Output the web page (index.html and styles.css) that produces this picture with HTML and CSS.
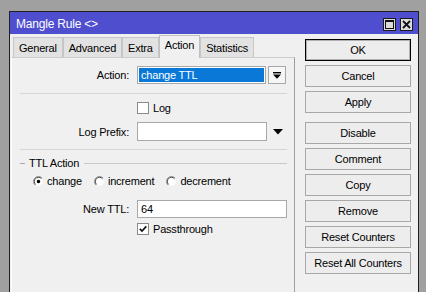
FILE: index.html
```html
<!DOCTYPE html>
<html>
<head>
<meta charset="utf-8">
<link rel="stylesheet" href="styles.css">
</head>
<body>
<div class="window">
  <div class="titlebar">
    <span class="title">Mangle Rule &lt;&gt;</span>
    <span class="tbtns">
      <span class="tbtn"><svg width="11" height="11" viewBox="0 0 11 11"><rect x="1.5" y="1.5" width="8" height="8" fill="none" stroke="#111" stroke-width="1"/><rect x="1" y="1" width="9" height="2" fill="#111"/></svg></span>
      <span class="tbtn"><svg width="11" height="11" viewBox="0 0 11 11"><path d="M2 2 L9 9 M9 2 L2 9" stroke="#111" stroke-width="1.8" fill="none"/></svg></span>
    </span>
  </div>
  <div class="body">
    <div class="left">
      <div class="tabs">
        <div class="tab">General</div>
        <div class="tab">Advanced</div>
        <div class="tab">Extra</div>
        <div class="tab active">Action</div>
        <div class="tab">Statistics</div>
      </div>
      <div class="panel">
        <div class="row r-action">
          <span class="lbl">Action:</span>
          <div class="select"><span class="sel-text">change TTL</span></div>
          <div class="dd-btn"><svg width="8" height="7" viewBox="0 0 8 7"><rect x="0" y="0" width="8" height="1.4" fill="#000"/><path d="M0 2.6 H8 L4 6.8 Z" fill="#000"/></svg></div>
        </div>
        <div class="sep s1"></div>
        <div class="row r-log">
          <span class="lbl"></span>
          <span class="cb"></span>
          <span class="cb-text">Log</span>
        </div>
        <div class="row r-prefix">
          <span class="lbl">Log Prefix:</span>
          <div class="field prefix"></div>
          <svg class="prefix-arrow" width="10" height="6" viewBox="0 0 10 6"><path d="M0 0 H10 L5 5.5 Z" fill="#000"/></svg>
        </div>
        <div class="sep s2"></div>
        <div class="legend">
          <span class="lg-seg"></span>
          <span class="lg-text">TTL Action</span>
          <span class="lg-line"></span>
        </div>
        <div class="radios">
          <span class="radio-item">
            <svg width="11" height="11" viewBox="0 0 12 12"><circle cx="6" cy="6" r="4.6" fill="#fff"/><path d="M2.1 9.9 A5.5 5.5 0 0 1 9.9 2.1" stroke="#8a8a8a" fill="none"/><path d="M2.8 9.2 A4.5 4.5 0 0 1 9.2 2.8" stroke="#404040" fill="none"/><circle cx="6" cy="6" r="1.9" fill="#000"/></svg>
            <span>change</span>
          </span>
          <span class="radio-item">
            <svg width="11" height="11" viewBox="0 0 12 12"><circle cx="6" cy="6" r="4.6" fill="#fff"/><path d="M2.1 9.9 A5.5 5.5 0 0 1 9.9 2.1" stroke="#8a8a8a" fill="none"/><path d="M2.8 9.2 A4.5 4.5 0 0 1 9.2 2.8" stroke="#404040" fill="none"/></svg>
            <span>increment</span>
          </span>
          <span class="radio-item">
            <svg width="11" height="11" viewBox="0 0 12 12"><circle cx="6" cy="6" r="4.6" fill="#fff"/><path d="M2.1 9.9 A5.5 5.5 0 0 1 9.9 2.1" stroke="#8a8a8a" fill="none"/><path d="M2.8 9.2 A4.5 4.5 0 0 1 9.2 2.8" stroke="#404040" fill="none"/></svg>
            <span>decrement</span>
          </span>
        </div>
        <div class="row r-ttl">
          <span class="lbl">New TTL:</span>
          <div class="field ttl"><span class="field-text">64</span></div>
        </div>
        <div class="row r-pass">
          <span class="lbl"></span>
          <span class="cb"><svg width="10" height="10" viewBox="0 0 10 10"><path d="M1.8 4.8 L4 7 L8.3 2.4" stroke="#111" stroke-width="1.7" fill="none"/></svg></span>
          <span class="cb-text">Passthrough</span>
        </div>
      </div>
    </div>
    <div class="buttons">
      <div class="btn ok">OK</div>
      <div class="btn">Cancel</div>
      <div class="btn">Apply</div>
      <div class="btn extra-gap">Disable</div>
      <div class="btn">Comment</div>
      <div class="btn">Copy</div>
      <div class="btn">Remove</div>
      <div class="btn">Reset Counters</div>
      <div class="btn">Reset All Counters</div>
    </div>
  </div>
</div>
</body>
</html>
```

FILE: styles.css
```css
html, body {
  margin: 0;
  padding: 0;
}
body {
  background: #a0a0a0;
  width: 426px;
  height: 292px;
  overflow: hidden;
  font-family: "Liberation Sans", Arial, sans-serif;
  font-size: 11px;
  letter-spacing: -0.2px;
  color: #000;
}
.window {
  margin: 11px 0 0 9px;
  width: 408px;
  height: 280px;
  border: 1px solid #202020;
  border-bottom: none;
  background: #f0f0f0;
  display: flex;
  flex-direction: column;
}
.titlebar {
  height: 22px;
  flex: none;
  background: #4e4ecf;
  display: flex;
  align-items: center;
  padding: 0 5px 0 6px;
  color: #fff;
  font-size: 12px;
}
.title {
  flex: 1;
  margin-top: 1px;
}
.tbtns {
  display: flex;
  gap: 4px;
  margin-top: 2px;
}
.tbtn {
  width: 11px;
  height: 11px;
  border: 1px solid #1a1a1a;
  background: #dcdcdc;
  display: flex;
  align-items: center;
  justify-content: center;
}
.body {
  flex: 1;
  display: flex;
  min-height: 0;
}
.left {
  width: 284px;
  margin-left: 1px;
  display: flex;
  flex-direction: column;
}
.tabs {
  display: flex;
  align-items: flex-end;
  height: 20px;
  padding-top: 3px;
  padding-left: 2px;
}
.tab {
  height: 19px;
  line-height: 20px;
  padding: 0 5px;
  border: 1px solid #c6c6c6;
  border-bottom: none;
  background: #e2e2e2;
  white-space: nowrap;
}
.tab.active {
  height: 22px;
  line-height: 18px;
  background: #f0f0f0;
  margin-bottom: -1px;
  position: relative;
  z-index: 1;
  border-color: #c0c0c0;
}
.panel {
  flex: 1;
  border-top: 1px solid #cdcdcd;
  border-left: 1px solid #ffffff;
  border-right: 1px solid #a0a0a0;
  display: flex;
  flex-direction: column;
}
.row {
  display: flex;
  align-items: center;
  flex: none;
}
.lbl {
  width: 117px;
  margin-right: 8px;
  text-align: right;
  flex: none;
}
.r-action {
  margin-top: 8px;
  height: 18px;
}
.select {
  box-sizing: border-box;
  width: 129px;
  height: 18px;
  border: 1px solid #a8a8a8;
  padding: 1px;
  background: #fff;
  display: flex;
}
.sel-text {
  flex: 1;
  background: #0a78d7;
  color: #fff;
  padding-left: 2px;
  line-height: 14px;
}
.dd-btn {
  box-sizing: border-box;
  width: 18px;
  height: 18px;
  margin-left: 2px;
  border: 1px solid #a8a8a8;
  background: #f6f6f6;
  display: flex;
  align-items: center;
  justify-content: center;
}
.sep {
  height: 1px;
  background: #d6d6d6;
  margin: 0 7px 0 8px;
  flex: none;
}
.s1 {
  margin-top: 9px;
}
.s2 {
  margin-top: 8px;
}
.r-log {
  margin-top: 7px;
  height: 14px;
}
.cb {
  box-sizing: border-box;
  width: 12px;
  height: 12px;
  border: 1px solid #8a8a8a;
  background: #fff;
  display: flex;
  align-items: center;
  justify-content: center;
  flex: none;
}
.cb-text {
  margin-left: 4px;
}
.r-prefix {
  margin-top: 7px;
  height: 19px;
}
.field {
  box-sizing: border-box;
  height: 18px;
  border: 1px solid #a8a8a8;
  background: #fff;
  display: flex;
  align-items: center;
}
.prefix {
  width: 130px;
  height: 19px;
}
.prefix-arrow {
  margin-left: 6px;
}
.legend {
  margin: 6px 7px 0 8px;
  height: 14px;
  display: flex;
  align-items: center;
  flex: none;
}
.lg-seg {
  width: 5px;
  height: 1px;
  background: #a8a8a8;
}
.lg-text {
  padding: 0 5px 0 4px;
}
.lg-line {
  flex: 1;
  height: 1px;
  background: #c8c8c8;
}
.radios {
  margin: 4px 0 0 21px;
  height: 14px;
  display: flex;
  align-items: center;
  flex: none;
}
.radio-item {
  display: flex;
  align-items: center;
  margin-right: 12px;
}
.radio-item span {
  margin-left: 3px;
}
.r-ttl {
  margin-top: 12px;
  height: 18px;
}
.ttl {
  width: 150px;
}
.field-text {
  padding-left: 3px;
}
.r-pass {
  margin-top: 4px;
  height: 14px;
}
.buttons {
  width: 106px;
  margin-left: 10px;
  padding-top: 5px;
  display: flex;
  flex-direction: column;
  gap: 4px;
}
.btn {
  height: 20px;
  flex: none;
  border: 1px solid #a8a8a8;
  background: #ededed;
  display: flex;
  align-items: center;
  justify-content: center;
  white-space: nowrap;
}
.btn.ok {
  border-color: #000;
  box-shadow: inset 0 0 0 1px #b0b0b0;
}
.btn.extra-gap {
  margin-top: 5px;
}
```
